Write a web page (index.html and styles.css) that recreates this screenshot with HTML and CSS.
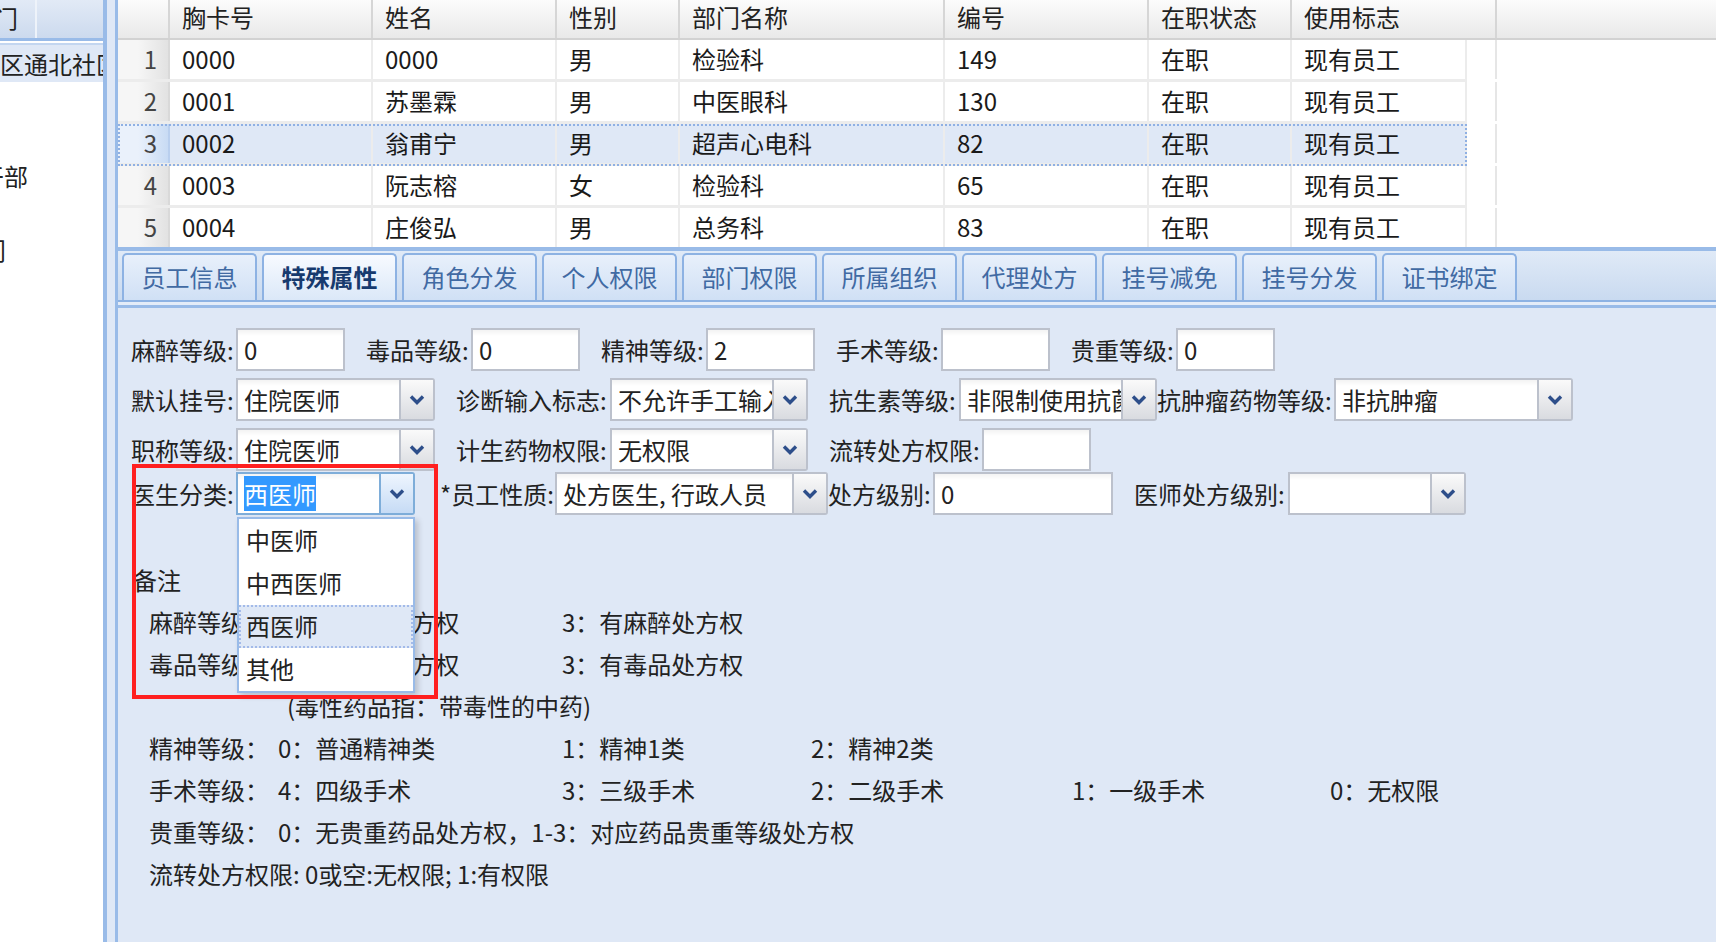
FILE: index.html
```html
<!DOCTYPE html>
<html lang="zh-CN">
<head>
    <meta charset="UTF-8">
    <title>员工管理 - 特殊属性</title>
    <link rel="stylesheet" href="styles.css">
</head>
<body>
<div class="app">
    <!-- 左侧部门树 -->
    <div class="side">
        <div class="side-head">
            <div class="hcell first"><span class="shift-head">部门</span></div>
            <div class="hcell rest"></div>
        </div>
        <div class="tree">
            <div class="node sel">区通北社区</div>
            <div class="node"></div>
            <div class="node"></div>
            <div class="node"><span class="shift-1">干部</span></div>
            <div class="node"></div>
            <div class="node"><span class="shift-2">门</span></div>
        </div>
    </div>
    <div class="splitter"></div>

    <div class="main">
        <!-- 员工列表 -->
        <div class="grid">
            <div class="grid-head">
                <div class="h w-rn"></div>
                <div class="h w-card">胸卡号</div>
                <div class="h w-name">姓名</div>
                <div class="h w-sex">性别</div>
                <div class="h w-dept">部门名称</div>
                <div class="h w-no">编号</div>
                <div class="h w-state">在职状态</div>
                <div class="h w-flag-h">使用标志</div>
                <div class="h fill"></div>
            </div>
            <div class="row">
                <div class="rec">
                    <div class="c rn">1</div><div class="c w-card">0000</div><div class="c w-name">0000</div><div class="c w-sex">男</div><div class="c w-dept">检验科</div><div class="c w-no">149</div><div class="c w-state">在职</div><div class="c w-flag">现有员工</div>
                </div>
                <div class="pad"></div>
            </div>
            <div class="row">
                <div class="rec">
                    <div class="c rn">2</div><div class="c w-card">0001</div><div class="c w-name">苏墨霖</div><div class="c w-sex">男</div><div class="c w-dept">中医眼科</div><div class="c w-no">130</div><div class="c w-state">在职</div><div class="c w-flag">现有员工</div>
                </div>
                <div class="pad"></div>
            </div>
            <div class="row sel">
                <div class="rec">
                    <div class="c rn">3</div><div class="c w-card">0002</div><div class="c w-name">翁甫宁</div><div class="c w-sex">男</div><div class="c w-dept">超声心电科</div><div class="c w-no">82</div><div class="c w-state">在职</div><div class="c w-flag">现有员工</div>
                </div>
                <div class="pad"></div>
            </div>
            <div class="row">
                <div class="rec">
                    <div class="c rn">4</div><div class="c w-card">0003</div><div class="c w-name">阮志榕</div><div class="c w-sex">女</div><div class="c w-dept">检验科</div><div class="c w-no">65</div><div class="c w-state">在职</div><div class="c w-flag">现有员工</div>
                </div>
                <div class="pad"></div>
            </div>
            <div class="row">
                <div class="rec">
                    <div class="c rn">5</div><div class="c w-card">0004</div><div class="c w-name">庄俊弘</div><div class="c w-sex">男</div><div class="c w-dept">总务科</div><div class="c w-no">83</div><div class="c w-state">在职</div><div class="c w-flag">现有员工</div>
                </div>
                <div class="pad"></div>
            </div>
        </div>

        <!-- 选项卡 -->
        <div class="tabbar">
            <div class="tab">员工信息</div>
            <div class="tab active">特殊属性</div>
            <div class="tab">角色分发</div>
            <div class="tab">个人权限</div>
            <div class="tab">部门权限</div>
            <div class="tab">所属组织</div>
            <div class="tab">代理处方</div>
            <div class="tab">挂号减免</div>
            <div class="tab">挂号分发</div>
            <div class="tab">证书绑定</div>
        </div>
        <div class="tab-spacer"></div>

        <div class="panel">
            <div class="frow">
                <div class="field"><span class="lbl l4">麻醉等级:</span><div class="txt w109">0</div></div>
                <div class="field"><span class="lbl l4">毒品等级:</span><div class="txt w109">0</div></div>
                <div class="field"><span class="lbl l4">精神等级:</span><div class="txt w109">2</div></div>
                <div class="field"><span class="lbl l4">手术等级:</span><div class="txt w109"></div></div>
                <div class="field"><span class="lbl l4">贵重等级:</span><div class="txt w99">0</div></div>
            </div>
            <div class="frow">
                <div class="field"><span class="lbl l4">默认挂号:</span>
                    <div class="combo w199"><div class="combo-text">住院医师</div><div class="btn"><svg width="16" height="10" viewBox="0 0 16 10"><path d="M2 1.5 L8 7.5 L14 1.5" fill="none" stroke="#2d4e8a" stroke-width="3.4"/></svg></div></div>
                </div>
                <div class="field"><span class="lbl l6">诊断输入标志:</span>
                    <div class="combo w198"><div class="combo-text">不允许手工输入</div><div class="btn"><svg width="16" height="10" viewBox="0 0 16 10"><path d="M2 1.5 L8 7.5 L14 1.5" fill="none" stroke="#2d4e8a" stroke-width="3.4"/></svg></div></div>
                </div>
                <div class="field"><span class="lbl l5">抗生素等级:</span>
                    <div class="combo w198"><div class="combo-text">非限制使用抗菌药物</div><div class="btn"><svg width="16" height="10" viewBox="0 0 16 10"><path d="M2 1.5 L8 7.5 L14 1.5" fill="none" stroke="#2d4e8a" stroke-width="3.4"/></svg></div></div>
                </div>
                <div class="field snug"><span class="lbl l7">抗肿瘤药物等级:</span>
                    <div class="combo w239"><div class="combo-text">非抗肿瘤</div><div class="btn"><svg width="16" height="10" viewBox="0 0 16 10"><path d="M2 1.5 L8 7.5 L14 1.5" fill="none" stroke="#2d4e8a" stroke-width="3.4"/></svg></div></div>
                </div>
            </div>
            <div class="frow close">
                <div class="field"><span class="lbl l4">职称等级:</span>
                    <div class="combo w199"><div class="combo-text">住院医师</div><div class="btn"><svg width="16" height="10" viewBox="0 0 16 10"><path d="M2 1.5 L8 7.5 L14 1.5" fill="none" stroke="#2d4e8a" stroke-width="3.4"/></svg></div></div>
                </div>
                <div class="field"><span class="lbl l6">计生药物权限:</span>
                    <div class="combo w198"><div class="combo-text">无权限</div><div class="btn"><svg width="16" height="10" viewBox="0 0 16 10"><path d="M2 1.5 L8 7.5 L14 1.5" fill="none" stroke="#2d4e8a" stroke-width="3.4"/></svg></div></div>
                </div>
                <div class="field"><span class="lbl l6b">流转处方权限:</span><div class="txt w109"></div></div>
            </div>
            <div class="frow">
                <div class="field"><span class="lbl l4">医生分类:</span>
                    <div class="combo w179 focus">
                        <div class="combo-text"><span class="picked">西医师</span></div>
                        <div class="btn"><svg width="16" height="10" viewBox="0 0 16 10"><path d="M2 1.5 L8 7.5 L14 1.5" fill="none" stroke="#2d4e8a" stroke-width="3.4"/></svg></div>
                        <div class="droplist">
                            <div class="opt">中医师</div>
                            <div class="opt">中西医师</div>
                            <div class="opt cur">西医师</div>
                            <div class="opt">其他</div>
                        </div>
                    </div>
                </div>
                <div class="field loose"><span class="lbl lstar">*员工性质:</span>
                    <div class="combo w273"><div class="combo-text">处方医生, 行政人员</div><div class="btn"><svg width="16" height="10" viewBox="0 0 16 10"><path d="M2 1.5 L8 7.5 L14 1.5" fill="none" stroke="#2d4e8a" stroke-width="3.4"/></svg></div></div>
                </div>
                <div class="field snug"><span class="lbl l4">处方级别:</span><div class="txt w180">0</div></div>
                <div class="field"><span class="lbl l6">医师处方级别:</span>
                    <div class="combo w178"><div class="combo-text"></div><div class="btn"><svg width="16" height="10" viewBox="0 0 16 10"><path d="M2 1.5 L8 7.5 L14 1.5" fill="none" stroke="#2d4e8a" stroke-width="3.4"/></svg></div></div>
                </div>
            </div>

            <div class="notes">
                <div class="note-title">备注</div>
                <div class="note-row"><span>麻醉等级：</span><span>0：无麻醉处方权</span><span>3：有麻醉处方权</span></div>
                <div class="note-row"><span>毒品等级：</span><span>0：无毒品处方权</span><span>3：有毒品处方权</span></div>
                <div class="note-row"><span></span><span class="note-paren">(毒性药品指：带毒性的中药)</span></div>
                <div class="note-row"><span>精神等级：</span><span>0：普通精神类</span><span>1：精神1类</span><span>2：精神2类</span></div>
                <div class="note-row"><span>手术等级：</span><span>4：四级手术</span><span>3：三级手术</span><span>2：二级手术</span><span>1：一级手术</span><span>0：无权限</span></div>
                <div class="note-row"><span>贵重等级：</span><span class="note-wide">0：无贵重药品处方权，1-3：对应药品贵重等级处方权</span></div>
                <div class="note-line">流转处方权限: 0或空:无权限; 1:有权限</div>
            </div>

            <!-- 标注框 -->
            <div class="mark"></div>
        </div>
    </div>
</div>
</body>
</html>
```

FILE: styles.css
```css
* {
    box-sizing: border-box;
}
body {
    margin: 0;
    font-family: "Noto Sans CJK SC", "Microsoft YaHei", sans-serif;
    font-size: 24px;
    color: #222;
    background: #fff;
    overflow: hidden;
}
.app {
    display: flex;
    width: 1716px;
    height: 942px;
}

/* 左侧树 */
.side {
    width: 107px;
    flex: none;
    background: #fff;
    border-right: 4px solid #99bbe8;
    overflow: hidden;
}
.side-head {
    display: flex;
    height: 41px;
    border-bottom: 3px solid #99bbe8;
    background: linear-gradient(#e2eaf6, #ccdaee);
}
.hcell {
    line-height: 36px;
    white-space: nowrap;
    overflow: hidden;
}
.hcell.first {
    width: 37px;
    border-right: 2px solid #eef3fa;
}
.hcell.rest {
    flex: 1;
}
.shift-head {
    margin-left: -30px;
}
.tree {
    padding-top: 2px;
}
.node {
    height: 37.3px;
    line-height: 37px;
    white-space: nowrap;
    overflow: hidden;
}
.node.sel {
    height: 39px;
    background: #dfe8f6;
    border-top: 2px solid #c3d6f0;
}
.shift-1 {
    margin-left: -20px;
}
.shift-2 {
    margin-left: -18px;
}
.splitter {
    width: 8px;
    flex: none;
    background: #dfe8f6;
}
.main {
    flex: 1;
    min-width: 0;
    border-left: 3px solid #99bbe8;
    display: flex;
    flex-direction: column;
}

/* 表格 */
.grid {
    height: 247px;
    flex: none;
    background: #fff;
    overflow: hidden;
}
.grid-head {
    display: flex;
    height: 40px;
    border-bottom: 2px solid #d2d2d2;
    background: linear-gradient(#fcfcfc, #e9e9e9);
}
.grid-head .h {
    flex: none;
    line-height: 33px;
    padding-left: 12px;
    border-right: 2px solid #d6d6d6;
    white-space: nowrap;
}
.grid-head .h.fill {
    flex: 1;
    border-right: none;
}
.w-rn { width: 52px; }
.w-card { width: 203px; }
.w-name { width: 184px; }
.w-sex { width: 123px; }
.w-dept { width: 265px; }
.w-no { width: 204px; }
.w-state { width: 143px; }
.w-flag { width: 175px; }
.w-flag-h { width: 205px; }
.row {
    display: flex;
    height: 42px;
    flex: none;
}
.rec {
    display: flex;
    width: 1349px;
    flex: none;
    border-bottom: 3px solid #ececec;
}
.rec .c {
    flex: none;
    padding-left: 12px;
    line-height: 38px;
    border-right: 2px solid #ececec;
    white-space: nowrap;
    color: #1a1a1a;
}
.rec .rn {
    width: 52px;
    padding: 0 11px 0 0;
    text-align: right;
    color: #444;
    background: linear-gradient(90deg, #f6f6f6 40%, #e2e2e2);
    border-right: 2px solid #d9d9d9;
}
.row.sel .rec {
    background: #dfe8f6;
    outline: 2px dotted #8fb0e3;
    outline-offset: -2px;
}
.row.sel .rn {
    background: linear-gradient(90deg, #eaf1fb 40%, #c8dbf4);
    border-right-color: #b9cfee;
}
.pad {
    width: 30px;
    flex: none;
    border-right: 2px solid #e6e6e6;
    margin-bottom: 3px;
}

/* 选项卡 */
.tabbar {
    flex: none;
    height: 55px;
    display: flex;
    align-items: flex-end;
    gap: 5px;
    padding-left: 4px;
    border-top: 4px solid #99bbe8;
    border-bottom: 2px solid #8db2e3;
    background: linear-gradient(#e0eaf7, #c9daf0);
}
.tab {
    width: 135px;
    height: 47px;
    flex: none;
    text-align: center;
    line-height: 44px;
    color: #416aa3;
    border: 2px solid #8db2e3;
    border-bottom: none;
    border-radius: 5px 5px 0 0;
    background: linear-gradient(#e8f0fb, #d0e0f5);
}
.tab.active {
    color: #173a6e;
    font-weight: bold;
    background: linear-gradient(#f7faff, #dbe8f8);
}
.tab-spacer {
    flex: none;
    height: 6px;
    background: #e4ecf8;
    border-bottom: 3px solid #99bbe8;
}

/* 表单 */
.panel {
    flex: 1;
    position: relative;
    background: #dfe8f6;
    padding: 20px 0 0 13px;
}
.frow {
    display: flex;
    align-items: center;
    height: 43px;
    margin-bottom: 7px;
}
.frow.close {
    margin-bottom: 1px;
}
.field {
    display: flex;
    align-items: center;
    flex: none;
}
.field + .field {
    margin-left: 21px;
}
.field.snug {
    margin-left: 0;
}
.field.loose {
    margin-left: 25px;
}
.lbl {
    flex: none;
    white-space: nowrap;
}
.l4 { width: 105px; }
.l5 { width: 130px; }
.l6 { width: 154px; }
.l6b { width: 153px; }
.l7 { width: 177px; }
.lstar { width: 115px; }
.w99 { width: 99px; }
.w109 { width: 109px; }
.w178 { width: 178px; }
.w179 { width: 179px; }
.w180 { width: 180px; }
.w198 { width: 198px; }
.w199 { width: 199px; }
.w239 { width: 239px; }
.w273 { width: 273px; }
.txt {
    height: 43px;
    padding-left: 6px;
    line-height: 39px;
    background: linear-gradient(#f3f3f3, #fff 6px);
    border: 2px solid #bcc1cc;
}
.combo {
    position: relative;
    display: flex;
    height: 43px;
    background: linear-gradient(#f3f3f3, #fff 6px);
    border: 2px solid #bcc1cc;
    border-radius: 0 3px 3px 0;
}
.combo-text {
    flex: 1;
    min-width: 0;
    padding-left: 6px;
    line-height: 39px;
    white-space: nowrap;
    overflow: hidden;
}
.combo .btn {
    width: 34px;
    flex: none;
    display: flex;
    align-items: center;
    justify-content: center;
    border-left: 2px solid #bcc1cc;
    background: linear-gradient(#fafafa, #d9dbe0);
}
.combo.focus {
    border-color: #7eadd9;
}
.combo.focus .btn {
    border-left-color: #7eadd9;
    background: linear-gradient(#eef5fe, #c6dbf5);
}
.picked {
    background: #3399ff;
    color: #fff;
}
.droplist {
    position: absolute;
    left: -1px;
    top: calc(100% + 4px);
    width: 178px;
    z-index: 5;
    background: #fff;
    border: 2px solid #99bbe8;
    box-shadow: 3px 3px 6px rgba(0, 0, 0, 0.18);
}
.opt {
    height: 43px;
    line-height: 41px;
    padding-left: 7px;
}
.opt.cur {
    background: #dfe8f6;
    outline: 2px dotted #a3bae9;
    outline-offset: -2px;
}

/* 备注 */
.notes {
    margin-top: 44px;
    white-space: nowrap;
}
.note-title {
    line-height: 42px;
    padding-left: 2px;
}
.note-row {
    display: grid;
    grid-template-columns: 129px 284px 249px 261px 258px auto;
    line-height: 42px;
    padding-left: 18px;
}
.note-paren {
    grid-column: 2 / span 3;
    padding-left: 9px;
}
.note-wide {
    grid-column: 2 / -1;
}
.note-line {
    line-height: 42px;
    padding-left: 18px;
}
.mark {
    position: absolute;
    left: 14px;
    top: 156px;
    width: 306px;
    height: 235px;
    border: 4px solid #ff1f1f;
    z-index: 6;
}
```
